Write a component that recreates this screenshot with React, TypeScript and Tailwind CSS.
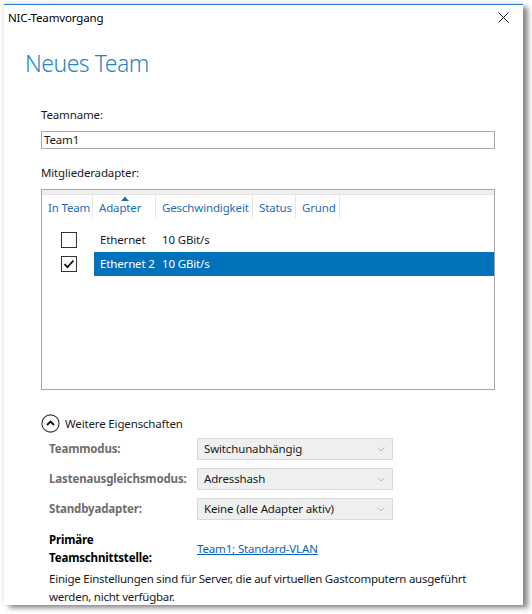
import React from "react";

const FONT = "font-['Segoe_UI','Noto_Sans',sans-serif]";

const COLUMNS = [
  { label: "In Team", w: 51 },
  { label: "Adapter", w: 63, sorted: true },
  { label: "Geschwindigkeit", w: 97 },
  { label: "Status", w: 43 },
  { label: "Grund", w: 44 },
];

const ADAPTERS = [
  { name: "Ethernet", speed: "10 GBit/s", checked: false, selected: false },
  { name: "Ethernet 2", speed: "10 GBit/s", checked: true, selected: true },
];

const PROPS = [
  { label: "Teammodus:", value: "Switchunabhängig" },
  { label: "Lastenausgleichsmodus:", value: "Adresshash" },
  { label: "Standbyadapter:", value: "Keine (alle Adapter aktiv)" },
];

function Checkbox({ checked }: { checked: boolean }) {
  return (
    <span className="flex h-[16px] w-[16px] items-center justify-center border border-[#333] bg-white">
      {checked && (
        <svg width="12" height="12" viewBox="0 0 12 12">
          <path d="M1.5 6.2 L4.5 9.2 L10.5 2.5" fill="none" stroke="#111" strokeWidth="1.8" />
        </svg>
      )}
    </span>
  );
}

function Chevron() {
  return (
    <svg width="8" height="5" viewBox="0 0 8 5">
      <path d="M0.5 0.5 L4 4 L7.5 0.5" fill="none" stroke="#b8b8b8" strokeWidth="1" />
    </svg>
  );
}

export default function App() {
  return (
    <div
      className={`min-h-screen whitespace-nowrap bg-white pl-[4px] pt-[4px] text-[11.5px] tracking-[-0.15px] text-[#1a1a1a] ${FONT}`}
    >
      <div className="h-[601px] w-[519px] border-t border-[#2b7cd3] bg-white shadow-[5px_3px_5px_rgba(0,0,0,0.45),-1px_-1px_4px_rgba(0,0,0,0.12)]">
        {/* Title bar */}
        <div className="flex h-[25px] items-center justify-between pl-[4px] pr-[14px]">
          <span className="leading-[16px] text-black">NIC-Teamvorgang</span>
          <svg width="11" height="11" viewBox="0 0 11 11">
            <path d="M0.5 0.5 L10.5 10.5 M10.5 0.5 L0.5 10.5" stroke="#111" strokeWidth="1" />
          </svg>
        </div>

        {/* Heading */}
        <h1 className="mt-[17px] pl-[21px] text-[23px] font-light leading-[32px] tracking-[-0.5px] text-[#2486c4]">
          Neues Team
        </h1>

        <div className="pl-[37px] pr-[24px]">
          <div className="mt-[28px] leading-[16px]">Teamname:</div>
          <div className="mt-[8px] flex h-[18px] w-[454px] items-center border border-[#a8a8a8] pl-[2px] leading-[16px]">
            Team1
          </div>

          <div className="mt-[16px] leading-[16px]">Mitgliederadapter:</div>

          {/* Adapter list */}
          <div className="mt-[8px] h-[201px] w-[454px] border border-[#a8a8a8] bg-white">
            <div className="h-[5px] border-b border-[#e3e3e3] bg-[#f0f0f0]" />
            <div className="flex h-[23px]">
              {COLUMNS.map((c) => (
                <div
                  key={c.label}
                  className="relative flex items-end border-r border-[#e5e5e5] pb-[2px] pl-[6px] leading-[16px] text-[#1e6db7]"
                  style={{ width: c.w }}
                >
                  {c.sorted && (
                    <svg className="absolute left-[28px] top-[1px]" width="8" height="5" viewBox="0 0 8 5">
                      <path d="M0 5 L4 0.5 L8 5 Z" fill="#1e6db7" />
                    </svg>
                  )}
                  {c.label}
                </div>
              ))}
            </div>
            <div className="mt-[10px] flex flex-col">
              {ADAPTERS.map((a) => (
                <div key={a.name} className="flex h-[24px] items-center">
                  <div className="flex w-[52px] justify-center pl-[2px]">
                    <Checkbox checked={a.checked} />
                  </div>
                  <div
                    className={`flex h-full flex-1 items-center leading-[16px] ${
                      a.selected ? "bg-[#0072bc] text-white" : "text-[#1a1a1a]"
                    }`}
                  >
                    <span className="w-[62px] pl-[6px]">{a.name}</span>
                    <span className="pl-[6px]">{a.speed}</span>
                  </div>
                </div>
              ))}
            </div>
          </div>

          {/* Further properties */}
          <div className="mt-[24px] flex items-center gap-[5px] leading-[18px]">
            <svg width="19" height="19" viewBox="0 0 19 19">
              <circle cx="9.5" cy="9.5" r="8.6" fill="none" stroke="#333" strokeWidth="1.1" />
              <path d="M6 11 L9.5 7.5 L13 11" fill="none" stroke="#111" strokeWidth="1.8" />
            </svg>
            <span>Weitere Eigenschaften</span>
          </div>

          <div className="mt-[5px] flex flex-col gap-[8px] pl-[8px]">
            {PROPS.map((p) => (
              <div key={p.label} className="flex items-center">
                <span className="w-[148px] font-bold leading-[16px] text-[#6e6e6e]">{p.label}</span>
                <div className="flex h-[22px] w-[196px] items-center justify-between border border-[#dadada] bg-[#efefef] pl-[6px] pr-[7px] leading-[16px]">
                  <span>{p.value}</span>
                  <Chevron />
                </div>
              </div>
            ))}
          </div>

          <div className="mt-[11px] flex items-center pl-[8px]">
            <span className="w-[148px] font-bold leading-[18px] text-black">
              Primäre
              <br />
              Teamschnittstelle:
            </span>
            <a className="leading-[16px] text-[#0563c1] underline">Team1; Standard-VLAN</a>
          </div>

          <p className="mt-[3px] pl-[8px] leading-[18px] tracking-[-0.24px] text-[#1a1a1a]">
            Einige Einstellungen sind für Server, die auf virtuellen Gastcomputern ausgeführt
            <br />
            werden, nicht verfügbar.
          </p>
        </div>
      </div>
    </div>
  );
}
